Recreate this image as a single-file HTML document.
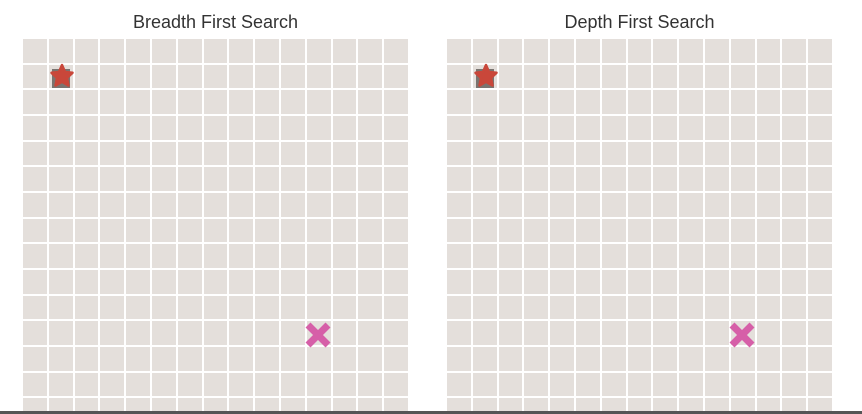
<!DOCTYPE html>
<html><head><style>
html,body{margin:0;width:862px;height:414px;overflow:hidden}
body{background:#fff;position:relative;font-family:"Liberation Sans",sans-serif}
.t{position:absolute;top:12px;font-size:18px;color:#333;text-align:center;width:385px}
.g{position:absolute;top:39px;width:385px;height:372px;overflow:hidden;display:grid;grid-template-columns:repeat(15,1fr);grid-template-rows:repeat(15,23.67px);gap:2px;background:#fff}
.g div{background:#e4dfdb}
.s{position:absolute;width:32px;height:32px}
.bar{position:absolute;left:0;top:411px;width:862px;height:3px;background:#555}
</style></head><body>
<div class="t" style="left:23px">Breadth First Search</div>
<div class="t" style="left:447px">Depth First Search</div>
<div class="g" id="a" style="left:23px"></div>
<div class="g" id="b" style="left:447px"></div>
<div class="bar"></div>
<script>
for(const id of ['a','b']){const g=document.getElementById(id);let h='';for(let i=0;i<225;i++)h+='<div></div>';g.innerHTML=h;}
</script>
<svg class="s" style="left:46px;top:60px" viewBox="0 0 32 32"><rect x="6" y="9" width="18" height="19" fill="#7a7470"/><path d="M16 5 L19 12 L26.5 12.8 L21 18 L22.5 25.5 L16 21.8 L9.5 25.5 L11 18 L5.5 12.8 L13 12Z" fill="#c9473a" stroke="#c9473a" stroke-width="2.5" stroke-linejoin="round"/></svg>
<svg class="s" style="left:470px;top:60px" viewBox="0 0 32 32"><rect x="6" y="9" width="18" height="19" fill="#7a7470"/><path d="M16 5 L19 12 L26.5 12.8 L21 18 L22.5 25.5 L16 21.8 L9.5 25.5 L11 18 L5.5 12.8 L13 12Z" fill="#c9473a" stroke="#c9473a" stroke-width="2.5" stroke-linejoin="round"/></svg>
<svg class="s" style="left:302px;top:319px" viewBox="0 0 32 32"><path d="M6 6 L26 26 M26 6 L6 26" stroke="#d65fa8" stroke-width="7"/></svg>
<svg class="s" style="left:726px;top:319px" viewBox="0 0 32 32"><path d="M6 6 L26 26 M26 6 L6 26" stroke="#d65fa8" stroke-width="7"/></svg>
</body></html>
